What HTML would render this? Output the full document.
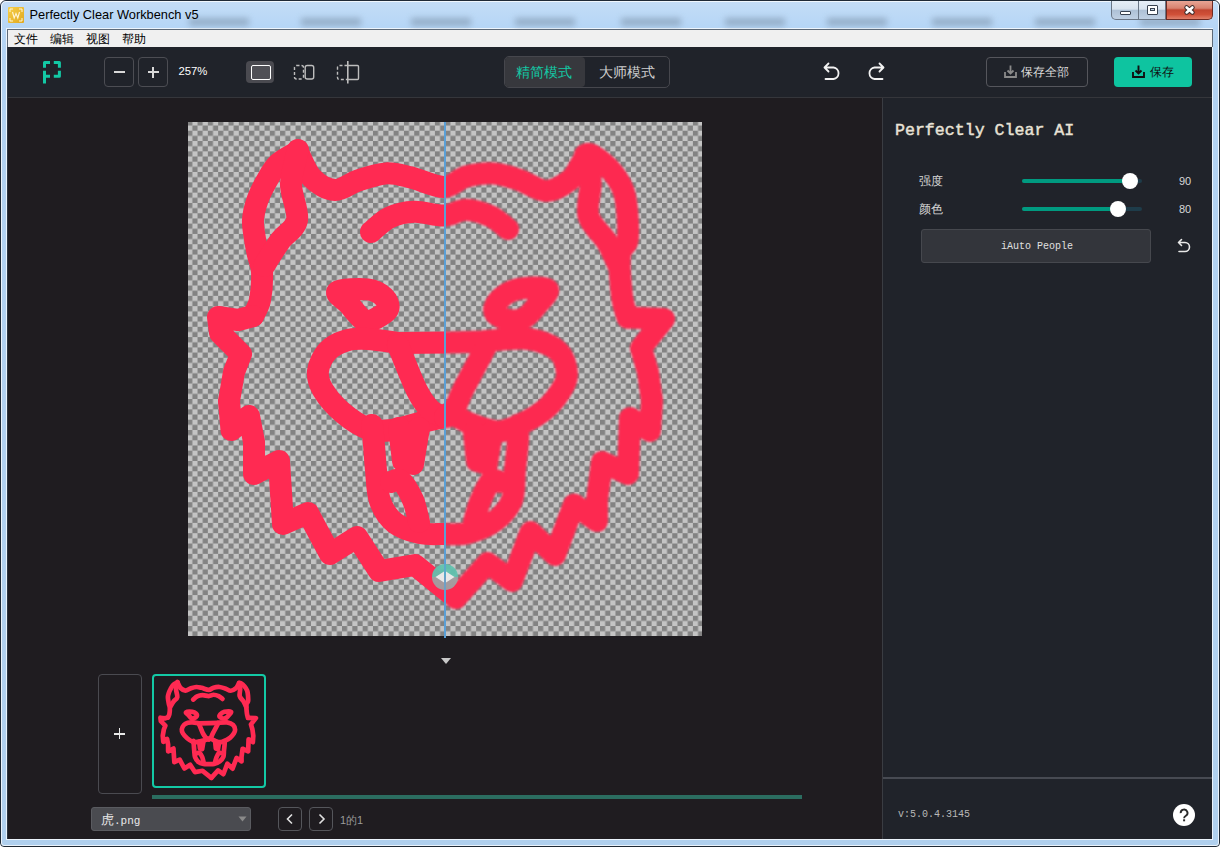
<!DOCTYPE html>
<html><head><meta charset="utf-8">
<style>
*{margin:0;padding:0;box-sizing:border-box}
html,body{width:1220px;height:847px;overflow:hidden;background:#fff}
body{position:relative;font-family:"Liberation Sans",sans-serif}
.a{position:absolute}
#frame{left:0;top:0;width:1220px;height:847px;border-radius:6px 6px 4px 4px;
 background:linear-gradient(180deg,#c4ddf6 0px,#b6d6f6 25px,#b2d2f2 60px,#b0d0ee 100%);
 border:1px solid #1f2a36}
#title{left:29.5px;top:7px;font-size:12.8px;color:#000;white-space:nowrap}
#menubar{left:7px;top:29px;width:1206px;height:18px;background:#f0f0f0;border:1px solid #5e6a78;border-bottom:none}
.menu{top:31px;font-size:12px;color:#000}
#client{left:8px;top:47px;width:1204px;height:792px;background:#1f1c20}
#toolbar{left:8px;top:47px;width:1204px;height:51px;background:#20232a;border-bottom:1px solid #35363b}
#panel{left:882px;top:98px;width:330px;height:741px;background:#20232a;border-left:1px solid #3a3c42}
.btn{border:1px solid #4c4d53;border-radius:4px}
.txt{white-space:nowrap}
</style></head><body>
<div id="frame" class="a"></div>
<div class="a" style="left:1px;top:1px;width:1218px;height:845px;border:1px solid rgba(255,255,255,.75);border-radius:5px 5px 3px 3px"></div>
<div class="a" style="left:6px;top:28px;width:1207px;height:812px;border:1px solid rgba(255,255,255,.75)"></div>
<div class="a" style="left:7px;top:29px;width:1205px;height:810px;border-left:1px solid #2c3642;border-top:1px solid #2c3642"></div>
<!-- blurred background stuff in title bar -->
<div class="a" style="left:0;top:0;width:1220px;height:30px;filter:blur(3px);opacity:.6"><div class="a" style="left:189px;top:18px;width:60px;height:8px;background:#7d93aa"></div><div class="a" style="left:301px;top:18px;width:60px;height:8px;background:#7d93aa"></div><div class="a" style="left:411px;top:18px;width:60px;height:8px;background:#7d93aa"></div><div class="a" style="left:515px;top:18px;width:60px;height:8px;background:#7d93aa"></div><div class="a" style="left:621px;top:18px;width:60px;height:8px;background:#7d93aa"></div><div class="a" style="left:725px;top:18px;width:60px;height:8px;background:#7d93aa"></div><div class="a" style="left:827px;top:18px;width:60px;height:8px;background:#7d93aa"></div><div class="a" style="left:932px;top:18px;width:60px;height:8px;background:#7d93aa"></div><div class="a" style="left:1035px;top:18px;width:60px;height:8px;background:#7d93aa"></div><div class="a" style="left:1140px;top:18px;width:60px;height:8px;background:#7d93aa"></div></div>
<!-- app icon -->
<div class="a" style="left:8px;top:7px;width:16px;height:16px;background:linear-gradient(135deg,#f7d04a,#e0a820);border-radius:1px"></div>
<svg class="a" style="left:8px;top:7px" width="16" height="16" viewBox="0 0 16 16" fill="none" stroke="#fff6d8" stroke-width="1">
 <path d="M2 5V2h3M11 2h3v3M14 11v3h-3M5 14H2v-3"/>
 <path d="M4.5 5l1.7 6 1.8-4.5 1.8 4.5 1.7-6" stroke-width="1.1"/>
</svg>
<div id="title" class="a txt">Perfectly Clear Workbench v5</div>
<!-- caption buttons -->
<div class="a" style="left:1111px;top:1px;width:55px;height:19px;border:1px solid #6a7686;border-top:none;border-radius:0 0 0 5px;background:linear-gradient(180deg,#e6eef7 0,#d8e3ef 45%,#aec1d6 52%,#bfd0e3 100%)"></div>
<div class="a" style="left:1138px;top:1px;width:1px;height:18px;background:#6a7686"></div>
<div class="a" style="left:1166px;top:1px;width:47px;height:19px;border:1px solid #6e2a22;border-top:none;border-radius:0 0 5px 0;background:linear-gradient(180deg,#e8a595 0,#d8826f 40%,#c24530 50%,#d05038 75%,#e0806a 100%)"></div>
<div class="a" style="left:1120px;top:11px;width:11px;height:4px;background:#fff;border:1px solid #384250;border-radius:1px"></div>
<div class="a" style="left:1147px;top:5px;width:11px;height:10px;background:#fff;border:1px solid #384250;border-radius:1px"></div>
<div class="a" style="left:1150px;top:8px;width:5px;height:3px;background:#c9d8e8;border:1px solid #384250"></div>
<svg class="a" style="left:1182px;top:3px" width="16" height="14"><path d="M4.6 4.4L10.4 9.4M10.4 4.4L4.6 9.4" stroke="#3a2a2a" stroke-width="4.6" stroke-linecap="round"/><path d="M4.6 4.4L10.4 9.4M10.4 4.4L4.6 9.4" stroke="#fff" stroke-width="2.6" stroke-linecap="round"/></svg>

<div id="menubar" class="a"></div>
<div class="a menu" style="left:14px">文件</div>
<div class="a menu" style="left:50px">编辑</div>
<div class="a menu" style="left:86px">视图</div>
<div class="a menu" style="left:122px">帮助</div>

<div id="client" class="a"></div>
<div id="toolbar" class="a"></div>
<!-- logo -->
<svg class="a" style="left:40px;top:58px" width="26" height="28" viewBox="0 0 26 28" fill="none" stroke="#13c9a5" stroke-width="3">
 <path d="M4.5 9.8V4.6H10M13.8 4.6H19.4V9.8M13.8 18.3H19.4V12.7" stroke-linejoin="round"/><path d="M4.5 12.7V25.5M4.5 18.3H10"/>
</svg>
<!-- zoom buttons -->
<div class="a btn" style="left:104px;top:57px;width:30px;height:30px"></div>
<div class="a" style="left:113.5px;top:71px;width:11px;height:2px;background:#d8d8d8"></div>
<div class="a btn" style="left:138px;top:57px;width:30px;height:30px"></div>
<div class="a" style="left:147.5px;top:71px;width:11px;height:2px;background:#d8d8d8"></div>
<div class="a" style="left:152px;top:66.5px;width:2px;height:11px;background:#d8d8d8"></div>
<div class="a txt" style="left:178.5px;top:65.3px;font-size:11.3px;color:#fff">257%</div>
<!-- view icons -->
<div class="a" style="left:246px;top:61px;width:28px;height:22px;background:#4a4a50;border-radius:4px"></div>
<div class="a" style="left:251px;top:65px;width:20px;height:15px;border:1.6px solid #fff;border-radius:2px;background:#505056"></div>
<svg class="a" style="left:290px;top:61px" width="28" height="22" fill="none" stroke="#bdbdbd" stroke-width="1.4">
 <rect x="4.5" y="4.5" width="9" height="13.5" rx="2" stroke-dasharray="3 2"/>
 <rect x="15.2" y="4.5" width="8.5" height="13.5" rx="2"/>
</svg>
<svg class="a" style="left:334px;top:59px" width="28" height="26" fill="none" stroke="#bdbdbd" stroke-width="1.4">
 <path d="M13.5 6.5H5.5Q3.5 6.5 3.5 8.5V18.5Q3.5 20.5 5.5 20.5H13.5" stroke-dasharray="3 2"/>
 <path d="M13.8 6.5H23.5Q24.5 6.5 24.5 7.5V19.5Q24.5 20.5 23.5 20.5H13.8"/>
 <path d="M13.8 2V24.5" stroke-width="1.6"/>
</svg>
<!-- mode toggle -->
<div class="a" style="left:504px;top:56px;width:166px;height:32px;border:1px solid #46474d;border-radius:5px"></div>
<div class="a" style="left:505px;top:57px;width:80px;height:30px;background:#37383d;border-radius:4px"></div>
<div class="a txt" style="left:516px;top:64px;font-size:14px;color:#13c9a5">精简模式</div>
<div class="a txt" style="left:599px;top:64px;font-size:14px;color:#cfcfcf">大师模式</div>
<!-- undo redo -->
<svg class="a" style="left:818px;top:58px" width="72" height="26" fill="none" stroke="#f2f2f2" stroke-width="1.8" stroke-linecap="round" stroke-linejoin="round">
 <path d="M7 9.5H15.5A5.8 5.8 0 0 1 15.5 21H7.5M10.5 5.5L6.5 9.5L10.5 13.5"/>
 <path d="M65 9.5H56.5A5.8 5.8 0 0 0 56.5 21H64.5M61.5 5.5L65.5 9.5L61.5 13.5"/>
</svg>
<!-- save all -->
<div class="a" style="left:986px;top:57px;width:102px;height:30px;border:1px solid #55565c;border-radius:4px"></div>
<svg class="a" style="left:1003px;top:64px" width="15" height="15" fill="none" stroke="#8a8a8a" stroke-width="1.8">
 <path d="M2 8v5h11V8M7.5 1.5v8M4.5 6.5l3 3 3-3"/>
</svg>
<div class="a txt" style="left:1021px;top:64px;font-size:12px;color:#dcdcdc">保存全部</div>
<!-- save -->
<div class="a" style="left:1114px;top:57px;width:78px;height:30px;background:#0ec4a0;border-radius:4px"></div>
<svg class="a" style="left:1131px;top:64px" width="15" height="15" fill="none" stroke="#111" stroke-width="1.9">
 <path d="M2 8v5h11V8M7.5 1.5v8M4.5 6.5l3 3 3-3"/>
</svg>
<div class="a txt" style="left:1150px;top:64px;font-size:12px;color:#111">保存</div>

<!-- canvas image -->
<div class="a" style="left:188px;top:122px;width:514px;height:514px;overflow:hidden">
<svg class="a" style="left:0;top:0" width="514" height="514"><defs><pattern id="ck" width="10.32" height="10.32" patternUnits="userSpaceOnUse" x="-0.8" y="-1.6"><rect width="10.32" height="10.32" fill="#c4c4c4"/><rect width="5.16" height="5.16" fill="#838383"/><rect x="5.16" y="5.16" width="5.16" height="5.16" fill="#838383"/></pattern></defs><rect width="514" height="514" fill="url(#ck)"/></svg>
<div class="a" style="left:0;top:0;width:257px;height:514px;overflow:hidden">
<svg class="a" style="left:-188px;top:-122px;filter:blur(0.5px)" width="1220" height="847" fill="none" stroke="#ff2a52" stroke-width="22" stroke-linecap="round" stroke-linejoin="round">
<path d="M297.0 152.0 C293.8 154.0 283.2 159.0 278.0 164.0 C272.8 169.0 269.4 176.0 266.0 182.0 C262.6 188.0 259.7 193.7 257.5 200.0 C255.3 206.3 253.4 213.5 253.0 220.0 C252.6 226.5 254.2 233.2 255.0 239.0 C255.8 244.8 256.8 249.5 258.0 255.0 C259.2 260.5 261.7 264.5 262.0 272.0 C262.3 279.5 261.5 292.7 260.0 300.0 C258.5 307.3 254.2 313.3 253.0 316.0"/><path d="M253.0 316.0 L238.0 320.0 L218.0 317.0 L220.0 333.0 L241.0 354.0 L234.0 372.0 L229.0 401.0 L231.5 430.0 L249.0 416.0 L254.0 442.0 L254.0 474.0 L279.0 461.0 L283.0 524.0 L308.0 513.0 L330.0 554.0 L357.0 537.0 L379.0 571.0 L415.0 565.0 L456.0 598.0"/><path d="M456.0 598.0 L487.6 563.0 L512.0 581.0 L530.6 532.0 L555.0 555.0 L574.0 504.5 L597.0 521.0 L597.0 500.0 L602.0 462.0 L628.0 474.0 L630.0 418.0 L650.0 431.0 L652.0 401.0 L648.0 372.0 L641.0 348.0 L664.0 319.0 L627.5 317.5"/><path d="M627.5 317.5 C626.6 313.9 623.2 306.4 622.0 296.0 C620.8 285.6 619.1 264.2 620.0 255.0 C620.9 245.8 626.2 247.0 627.5 240.5 C628.8 234.0 628.1 224.2 627.5 216.0 C626.9 207.8 626.4 198.9 623.7 191.4 C621.0 183.9 616.7 177.1 611.4 171.0 C606.1 164.9 596.4 157.7 592.0 155.0 C587.6 152.3 586.2 155.0 585.0 155.0"/><path d="M298.0 152.0 C300.3 156.3 305.8 171.7 312.0 178.0 C318.2 184.3 327.3 189.6 335.0 190.0 C342.7 190.4 349.6 183.3 358.0 180.5 C366.4 177.7 377.0 173.9 385.7 173.4 C394.4 172.9 400.7 175.0 410.4 177.3 C420.1 179.6 434.7 187.1 444.0 187.0 C453.3 186.9 457.6 178.9 466.0 176.6 C474.4 174.3 485.4 172.8 494.5 173.4 C503.6 174.1 511.8 177.6 520.5 180.5 C529.2 183.4 538.2 191.1 546.5 191.0 C554.8 190.9 564.2 184.5 570.0 180.0 C575.8 175.5 578.3 168.2 581.0 164.0 C583.7 159.8 585.2 156.5 586.0 155.0"/><path d="M298.0 150.0 C296.8 155.7 291.2 172.3 291.0 184.0 C290.8 195.7 298.8 210.5 297.0 220.0 C295.2 229.5 285.5 233.3 280.0 241.0 C274.5 248.7 266.7 261.8 264.0 266.0"/><path d="M588.0 156.0 C588.5 160.5 590.6 173.0 590.7 183.0 C590.8 193.0 586.0 206.4 588.5 216.0 C591.0 225.6 601.6 233.5 606.0 240.5 C610.4 247.5 612.8 253.6 615.0 258.0 C617.2 262.4 618.3 265.5 619.0 267.0"/><path d="M371.0 232.0 C374.1 229.6 382.4 220.9 389.6 217.5 C396.8 214.1 405.2 212.0 414.3 211.7 C423.4 211.4 435.4 215.9 444.0 215.6 C452.6 215.3 458.2 209.6 466.0 209.7 C473.8 209.8 483.6 213.0 490.6 216.2 C497.6 219.4 505.1 226.9 508.0 229.0"/><path d="M337.6 291.5 C340.8 289.1 359.9 288.5 367.6 289.4 C375.3 290.3 380.4 293.7 383.8 297.0 C387.2 300.3 389.9 305.5 387.9 309.4 C385.9 313.3 375.9 318.9 371.6 320.5 C367.3 322.1 366.0 321.9 362.2 319.1 C358.4 316.3 352.7 308.5 348.6 303.9 C344.5 299.3 334.4 293.9 337.6 291.5Z"/><path d="M547.4 289.2 C544.0 286.6 525.0 287.4 516.8 289.4 C508.6 291.4 501.6 297.1 498.0 301.1 C494.4 305.1 493.0 310.3 495.2 313.5 C497.4 316.7 506.4 319.7 511.4 320.4 C516.4 321.1 520.7 320.1 525.0 317.6 C529.3 315.1 533.4 309.9 537.1 305.2 C540.8 300.5 550.8 291.8 547.4 289.2Z"/><path d="M398.0 343.0 C392.9 342.3 376.2 339.4 367.5 339.0 C358.8 338.6 352.6 338.6 346.0 340.6 C339.4 342.6 332.3 345.9 327.6 351.0 C322.9 356.1 318.8 364.5 318.0 371.0 C317.2 377.5 318.8 383.0 323.0 390.0 C327.2 397.0 335.3 406.5 343.0 413.0 C350.7 419.5 360.8 426.2 369.0 429.0 C377.2 431.8 383.0 431.2 392.0 430.0 C401.0 428.8 414.2 424.2 423.0 422.0 C431.8 419.8 441.3 417.8 445.0 417.0"/><path d="M398.0 343.0 L450.0 342.4 L486.0 341.4"/><path d="M398.0 345.0 C401.1 352.5 411.3 379.2 416.7 390.0 C422.1 400.8 425.8 405.5 430.5 410.0 C435.2 414.5 442.6 415.8 445.0 417.0"/><path d="M486.0 346.7 C482.2 353.9 468.1 380.0 463.0 390.0 C457.9 400.0 458.3 402.4 455.3 406.9 C452.3 411.4 446.7 415.3 445.0 417.0"/><path d="M486.0 341.0 C493.2 340.7 517.0 337.3 529.0 339.0 C541.0 340.7 551.7 345.2 558.0 351.0 C564.3 356.8 566.7 367.2 567.0 374.0 C567.3 380.8 563.8 386.0 560.0 392.0 C556.2 398.0 550.8 404.7 544.4 410.0 C538.0 415.3 529.1 420.2 521.4 423.8 C513.7 427.4 506.8 431.4 498.3 431.4 C489.9 431.4 477.9 426.4 470.7 423.8 C463.5 421.2 459.3 417.1 455.0 416.0 C450.7 414.9 446.7 416.8 445.0 417.0"/><path d="M372.0 425.0 C372.3 428.3 373.3 437.5 374.0 445.0 C374.7 452.5 375.0 460.7 376.0 470.0 C377.0 479.3 376.8 492.2 380.0 501.0 C383.2 509.8 388.3 517.7 395.0 523.0 C401.7 528.3 411.8 531.2 420.0 533.0 C428.2 534.8 436.0 534.0 444.0 534.0 C452.0 534.0 459.5 535.2 468.0 533.0 C476.5 530.8 487.7 526.5 495.0 521.0 C502.3 515.5 508.7 508.5 512.0 500.0 C515.3 491.5 514.0 479.8 515.0 470.0 C516.0 460.2 517.5 448.5 518.0 441.0 C518.5 433.5 518.0 427.7 518.0 425.0"/><path d="M399.0 428.0 L403.0 461.0 L413.0 464.0 L419.0 428.0"/><path d="M474.0 432.0 L477.0 461.0 L487.0 464.0 L492.0 432.0"/><path d="M391.0 482.0 C392.7 481.8 397.3 478.0 401.0 481.0 C404.7 484.0 410.0 493.2 413.0 500.0 C416.0 506.8 418.0 518.3 419.0 522.0"/><path d="M500.0 482.0 C498.5 481.8 494.3 477.7 491.0 481.0 C487.7 484.3 482.8 495.2 480.0 502.0 C477.2 508.8 475.0 518.7 474.0 522.0"/>
</svg></div>
<div class="a" style="left:257px;top:0;width:257px;height:514px;overflow:hidden">
<svg class="a" style="left:-445px;top:-122px;filter:blur(0.9px)" width="1220" height="847" fill="none" stroke="#fd2950" stroke-width="22" stroke-linecap="round" stroke-linejoin="round">
<path d="M297.0 152.0 C293.8 154.0 283.2 159.0 278.0 164.0 C272.8 169.0 269.4 176.0 266.0 182.0 C262.6 188.0 259.7 193.7 257.5 200.0 C255.3 206.3 253.4 213.5 253.0 220.0 C252.6 226.5 254.2 233.2 255.0 239.0 C255.8 244.8 256.8 249.5 258.0 255.0 C259.2 260.5 261.7 264.5 262.0 272.0 C262.3 279.5 261.5 292.7 260.0 300.0 C258.5 307.3 254.2 313.3 253.0 316.0"/><path d="M253.0 316.0 L238.0 320.0 L218.0 317.0 L220.0 333.0 L241.0 354.0 L234.0 372.0 L229.0 401.0 L231.5 430.0 L249.0 416.0 L254.0 442.0 L254.0 474.0 L279.0 461.0 L283.0 524.0 L308.0 513.0 L330.0 554.0 L357.0 537.0 L379.0 571.0 L415.0 565.0 L456.0 598.0"/><path d="M456.0 598.0 L487.6 563.0 L512.0 581.0 L530.6 532.0 L555.0 555.0 L574.0 504.5 L597.0 521.0 L597.0 500.0 L602.0 462.0 L628.0 474.0 L630.0 418.0 L650.0 431.0 L652.0 401.0 L648.0 372.0 L641.0 348.0 L664.0 319.0 L627.5 317.5"/><path d="M627.5 317.5 C626.6 313.9 623.2 306.4 622.0 296.0 C620.8 285.6 619.1 264.2 620.0 255.0 C620.9 245.8 626.2 247.0 627.5 240.5 C628.8 234.0 628.1 224.2 627.5 216.0 C626.9 207.8 626.4 198.9 623.7 191.4 C621.0 183.9 616.7 177.1 611.4 171.0 C606.1 164.9 596.4 157.7 592.0 155.0 C587.6 152.3 586.2 155.0 585.0 155.0"/><path d="M298.0 152.0 C300.3 156.3 305.8 171.7 312.0 178.0 C318.2 184.3 327.3 189.6 335.0 190.0 C342.7 190.4 349.6 183.3 358.0 180.5 C366.4 177.7 377.0 173.9 385.7 173.4 C394.4 172.9 400.7 175.0 410.4 177.3 C420.1 179.6 434.7 187.1 444.0 187.0 C453.3 186.9 457.6 178.9 466.0 176.6 C474.4 174.3 485.4 172.8 494.5 173.4 C503.6 174.1 511.8 177.6 520.5 180.5 C529.2 183.4 538.2 191.1 546.5 191.0 C554.8 190.9 564.2 184.5 570.0 180.0 C575.8 175.5 578.3 168.2 581.0 164.0 C583.7 159.8 585.2 156.5 586.0 155.0"/><path d="M298.0 150.0 C296.8 155.7 291.2 172.3 291.0 184.0 C290.8 195.7 298.8 210.5 297.0 220.0 C295.2 229.5 285.5 233.3 280.0 241.0 C274.5 248.7 266.7 261.8 264.0 266.0"/><path d="M588.0 156.0 C588.5 160.5 590.6 173.0 590.7 183.0 C590.8 193.0 586.0 206.4 588.5 216.0 C591.0 225.6 601.6 233.5 606.0 240.5 C610.4 247.5 612.8 253.6 615.0 258.0 C617.2 262.4 618.3 265.5 619.0 267.0"/><path d="M371.0 232.0 C374.1 229.6 382.4 220.9 389.6 217.5 C396.8 214.1 405.2 212.0 414.3 211.7 C423.4 211.4 435.4 215.9 444.0 215.6 C452.6 215.3 458.2 209.6 466.0 209.7 C473.8 209.8 483.6 213.0 490.6 216.2 C497.6 219.4 505.1 226.9 508.0 229.0"/><path d="M337.6 291.5 C340.8 289.1 359.9 288.5 367.6 289.4 C375.3 290.3 380.4 293.7 383.8 297.0 C387.2 300.3 389.9 305.5 387.9 309.4 C385.9 313.3 375.9 318.9 371.6 320.5 C367.3 322.1 366.0 321.9 362.2 319.1 C358.4 316.3 352.7 308.5 348.6 303.9 C344.5 299.3 334.4 293.9 337.6 291.5Z"/><path d="M547.4 289.2 C544.0 286.6 525.0 287.4 516.8 289.4 C508.6 291.4 501.6 297.1 498.0 301.1 C494.4 305.1 493.0 310.3 495.2 313.5 C497.4 316.7 506.4 319.7 511.4 320.4 C516.4 321.1 520.7 320.1 525.0 317.6 C529.3 315.1 533.4 309.9 537.1 305.2 C540.8 300.5 550.8 291.8 547.4 289.2Z"/><path d="M398.0 343.0 C392.9 342.3 376.2 339.4 367.5 339.0 C358.8 338.6 352.6 338.6 346.0 340.6 C339.4 342.6 332.3 345.9 327.6 351.0 C322.9 356.1 318.8 364.5 318.0 371.0 C317.2 377.5 318.8 383.0 323.0 390.0 C327.2 397.0 335.3 406.5 343.0 413.0 C350.7 419.5 360.8 426.2 369.0 429.0 C377.2 431.8 383.0 431.2 392.0 430.0 C401.0 428.8 414.2 424.2 423.0 422.0 C431.8 419.8 441.3 417.8 445.0 417.0"/><path d="M398.0 343.0 L450.0 342.4 L486.0 341.4"/><path d="M398.0 345.0 C401.1 352.5 411.3 379.2 416.7 390.0 C422.1 400.8 425.8 405.5 430.5 410.0 C435.2 414.5 442.6 415.8 445.0 417.0"/><path d="M486.0 346.7 C482.2 353.9 468.1 380.0 463.0 390.0 C457.9 400.0 458.3 402.4 455.3 406.9 C452.3 411.4 446.7 415.3 445.0 417.0"/><path d="M486.0 341.0 C493.2 340.7 517.0 337.3 529.0 339.0 C541.0 340.7 551.7 345.2 558.0 351.0 C564.3 356.8 566.7 367.2 567.0 374.0 C567.3 380.8 563.8 386.0 560.0 392.0 C556.2 398.0 550.8 404.7 544.4 410.0 C538.0 415.3 529.1 420.2 521.4 423.8 C513.7 427.4 506.8 431.4 498.3 431.4 C489.9 431.4 477.9 426.4 470.7 423.8 C463.5 421.2 459.3 417.1 455.0 416.0 C450.7 414.9 446.7 416.8 445.0 417.0"/><path d="M372.0 425.0 C372.3 428.3 373.3 437.5 374.0 445.0 C374.7 452.5 375.0 460.7 376.0 470.0 C377.0 479.3 376.8 492.2 380.0 501.0 C383.2 509.8 388.3 517.7 395.0 523.0 C401.7 528.3 411.8 531.2 420.0 533.0 C428.2 534.8 436.0 534.0 444.0 534.0 C452.0 534.0 459.5 535.2 468.0 533.0 C476.5 530.8 487.7 526.5 495.0 521.0 C502.3 515.5 508.7 508.5 512.0 500.0 C515.3 491.5 514.0 479.8 515.0 470.0 C516.0 460.2 517.5 448.5 518.0 441.0 C518.5 433.5 518.0 427.7 518.0 425.0"/><path d="M399.0 428.0 L403.0 461.0 L413.0 464.0 L419.0 428.0"/><path d="M474.0 432.0 L477.0 461.0 L487.0 464.0 L492.0 432.0"/><path d="M391.0 482.0 C392.7 481.8 397.3 478.0 401.0 481.0 C404.7 484.0 410.0 493.2 413.0 500.0 C416.0 506.8 418.0 518.3 419.0 522.0"/><path d="M500.0 482.0 C498.5 481.8 494.3 477.7 491.0 481.0 C487.7 484.3 482.8 495.2 480.0 502.0 C477.2 508.8 475.0 518.7 474.0 522.0"/>
</svg></div>
</div>
<!-- split line and handle -->
<div class="a" style="left:444px;top:122px;width:2px;height:516px;background:#5a9fd6"></div>
<div class="a" style="left:432px;top:564px;width:26px;height:26px;border-radius:50%;background:linear-gradient(180deg,rgba(95,195,175,.92) 0,rgba(95,195,175,.92) 48%,rgba(160,160,162,.95) 52%,rgba(160,160,162,.95) 100%)"></div>
<svg class="a" style="left:432px;top:564px" width="26" height="26"><path d="M3.5 13L12 7.5V18.5ZM22.5 13L14 7.5V18.5Z" fill="#e8e8e8"/></svg>
<div class="a" style="left:444px;top:122px;width:2px;height:516px;background:rgba(90,159,214,.7)"></div>
<!-- down arrow -->
<svg class="a" style="left:440px;top:657px" width="12" height="8"><path d="M1 1H11L6 7Z" fill="#c8c8c8"/></svg>

<!-- filmstrip -->
<div class="a" style="left:98px;top:674px;width:44px;height:120px;border:1px solid #4a4a50;border-radius:4px"></div>
<div class="a" style="left:114px;top:733px;width:11px;height:1.6px;background:#e8e8e8"></div>
<div class="a" style="left:118.7px;top:728.3px;width:1.6px;height:11px;background:#e8e8e8"></div>
<div class="a" style="left:152px;top:674px;width:114px;height:114px;border:2px solid #13c9a5;border-radius:4px"></div>
<svg class="a" style="left:0;top:0" width="1220" height="847" fill="none" stroke="#ff2a52" stroke-width="22" stroke-linecap="round" stroke-linejoin="round">
<g transform="translate(154 676) scale(0.214) translate(-188 -122)"><path d="M297.0 152.0 C293.8 154.0 283.2 159.0 278.0 164.0 C272.8 169.0 269.4 176.0 266.0 182.0 C262.6 188.0 259.7 193.7 257.5 200.0 C255.3 206.3 253.4 213.5 253.0 220.0 C252.6 226.5 254.2 233.2 255.0 239.0 C255.8 244.8 256.8 249.5 258.0 255.0 C259.2 260.5 261.7 264.5 262.0 272.0 C262.3 279.5 261.5 292.7 260.0 300.0 C258.5 307.3 254.2 313.3 253.0 316.0"/><path d="M253.0 316.0 L238.0 320.0 L218.0 317.0 L220.0 333.0 L241.0 354.0 L234.0 372.0 L229.0 401.0 L231.5 430.0 L249.0 416.0 L254.0 442.0 L254.0 474.0 L279.0 461.0 L283.0 524.0 L308.0 513.0 L330.0 554.0 L357.0 537.0 L379.0 571.0 L415.0 565.0 L456.0 598.0"/><path d="M456.0 598.0 L487.6 563.0 L512.0 581.0 L530.6 532.0 L555.0 555.0 L574.0 504.5 L597.0 521.0 L597.0 500.0 L602.0 462.0 L628.0 474.0 L630.0 418.0 L650.0 431.0 L652.0 401.0 L648.0 372.0 L641.0 348.0 L664.0 319.0 L627.5 317.5"/><path d="M627.5 317.5 C626.6 313.9 623.2 306.4 622.0 296.0 C620.8 285.6 619.1 264.2 620.0 255.0 C620.9 245.8 626.2 247.0 627.5 240.5 C628.8 234.0 628.1 224.2 627.5 216.0 C626.9 207.8 626.4 198.9 623.7 191.4 C621.0 183.9 616.7 177.1 611.4 171.0 C606.1 164.9 596.4 157.7 592.0 155.0 C587.6 152.3 586.2 155.0 585.0 155.0"/><path d="M298.0 152.0 C300.3 156.3 305.8 171.7 312.0 178.0 C318.2 184.3 327.3 189.6 335.0 190.0 C342.7 190.4 349.6 183.3 358.0 180.5 C366.4 177.7 377.0 173.9 385.7 173.4 C394.4 172.9 400.7 175.0 410.4 177.3 C420.1 179.6 434.7 187.1 444.0 187.0 C453.3 186.9 457.6 178.9 466.0 176.6 C474.4 174.3 485.4 172.8 494.5 173.4 C503.6 174.1 511.8 177.6 520.5 180.5 C529.2 183.4 538.2 191.1 546.5 191.0 C554.8 190.9 564.2 184.5 570.0 180.0 C575.8 175.5 578.3 168.2 581.0 164.0 C583.7 159.8 585.2 156.5 586.0 155.0"/><path d="M298.0 150.0 C296.8 155.7 291.2 172.3 291.0 184.0 C290.8 195.7 298.8 210.5 297.0 220.0 C295.2 229.5 285.5 233.3 280.0 241.0 C274.5 248.7 266.7 261.8 264.0 266.0"/><path d="M588.0 156.0 C588.5 160.5 590.6 173.0 590.7 183.0 C590.8 193.0 586.0 206.4 588.5 216.0 C591.0 225.6 601.6 233.5 606.0 240.5 C610.4 247.5 612.8 253.6 615.0 258.0 C617.2 262.4 618.3 265.5 619.0 267.0"/><path d="M371.0 232.0 C374.1 229.6 382.4 220.9 389.6 217.5 C396.8 214.1 405.2 212.0 414.3 211.7 C423.4 211.4 435.4 215.9 444.0 215.6 C452.6 215.3 458.2 209.6 466.0 209.7 C473.8 209.8 483.6 213.0 490.6 216.2 C497.6 219.4 505.1 226.9 508.0 229.0"/><path d="M337.6 291.5 C340.8 289.1 359.9 288.5 367.6 289.4 C375.3 290.3 380.4 293.7 383.8 297.0 C387.2 300.3 389.9 305.5 387.9 309.4 C385.9 313.3 375.9 318.9 371.6 320.5 C367.3 322.1 366.0 321.9 362.2 319.1 C358.4 316.3 352.7 308.5 348.6 303.9 C344.5 299.3 334.4 293.9 337.6 291.5Z"/><path d="M547.4 289.2 C544.0 286.6 525.0 287.4 516.8 289.4 C508.6 291.4 501.6 297.1 498.0 301.1 C494.4 305.1 493.0 310.3 495.2 313.5 C497.4 316.7 506.4 319.7 511.4 320.4 C516.4 321.1 520.7 320.1 525.0 317.6 C529.3 315.1 533.4 309.9 537.1 305.2 C540.8 300.5 550.8 291.8 547.4 289.2Z"/><path d="M398.0 343.0 C392.9 342.3 376.2 339.4 367.5 339.0 C358.8 338.6 352.6 338.6 346.0 340.6 C339.4 342.6 332.3 345.9 327.6 351.0 C322.9 356.1 318.8 364.5 318.0 371.0 C317.2 377.5 318.8 383.0 323.0 390.0 C327.2 397.0 335.3 406.5 343.0 413.0 C350.7 419.5 360.8 426.2 369.0 429.0 C377.2 431.8 383.0 431.2 392.0 430.0 C401.0 428.8 414.2 424.2 423.0 422.0 C431.8 419.8 441.3 417.8 445.0 417.0"/><path d="M398.0 343.0 L450.0 342.4 L486.0 341.4"/><path d="M398.0 345.0 C401.1 352.5 411.3 379.2 416.7 390.0 C422.1 400.8 425.8 405.5 430.5 410.0 C435.2 414.5 442.6 415.8 445.0 417.0"/><path d="M486.0 346.7 C482.2 353.9 468.1 380.0 463.0 390.0 C457.9 400.0 458.3 402.4 455.3 406.9 C452.3 411.4 446.7 415.3 445.0 417.0"/><path d="M486.0 341.0 C493.2 340.7 517.0 337.3 529.0 339.0 C541.0 340.7 551.7 345.2 558.0 351.0 C564.3 356.8 566.7 367.2 567.0 374.0 C567.3 380.8 563.8 386.0 560.0 392.0 C556.2 398.0 550.8 404.7 544.4 410.0 C538.0 415.3 529.1 420.2 521.4 423.8 C513.7 427.4 506.8 431.4 498.3 431.4 C489.9 431.4 477.9 426.4 470.7 423.8 C463.5 421.2 459.3 417.1 455.0 416.0 C450.7 414.9 446.7 416.8 445.0 417.0"/><path d="M372.0 425.0 C372.3 428.3 373.3 437.5 374.0 445.0 C374.7 452.5 375.0 460.7 376.0 470.0 C377.0 479.3 376.8 492.2 380.0 501.0 C383.2 509.8 388.3 517.7 395.0 523.0 C401.7 528.3 411.8 531.2 420.0 533.0 C428.2 534.8 436.0 534.0 444.0 534.0 C452.0 534.0 459.5 535.2 468.0 533.0 C476.5 530.8 487.7 526.5 495.0 521.0 C502.3 515.5 508.7 508.5 512.0 500.0 C515.3 491.5 514.0 479.8 515.0 470.0 C516.0 460.2 517.5 448.5 518.0 441.0 C518.5 433.5 518.0 427.7 518.0 425.0"/><path d="M399.0 428.0 L403.0 461.0 L413.0 464.0 L419.0 428.0"/><path d="M474.0 432.0 L477.0 461.0 L487.0 464.0 L492.0 432.0"/><path d="M391.0 482.0 C392.7 481.8 397.3 478.0 401.0 481.0 C404.7 484.0 410.0 493.2 413.0 500.0 C416.0 506.8 418.0 518.3 419.0 522.0"/><path d="M500.0 482.0 C498.5 481.8 494.3 477.7 491.0 481.0 C487.7 484.3 482.8 495.2 480.0 502.0 C477.2 508.8 475.0 518.7 474.0 522.0"/></g>
</svg>
<div class="a" style="left:152px;top:795px;width:650px;height:4px;background:#2b6d60"></div>
<!-- bottom controls -->
<div class="a" style="left:91px;top:807px;width:160px;height:24px;background:#4a4b50;border:1px solid #5a5b60;border-radius:3px"></div>
<div class="a txt" style="left:101px;top:811px;font-size:13px;color:#e8e8e8">虎<span style="font-family:'Liberation Mono';font-size:11px">.png</span></div>
<svg class="a" style="left:238px;top:816px" width="9" height="6"><path d="M0.5 0.5H8.5L4.5 5.5Z" fill="#8a8a8a"/></svg>
<div class="a btn" style="left:278px;top:807px;width:24px;height:24px;border-color:#55565b"></div>
<div class="a btn" style="left:309px;top:807px;width:24px;height:24px;border-color:#55565b"></div>
<svg class="a" style="left:278px;top:807px" width="56" height="24" fill="none" stroke="#e0e0e0" stroke-width="1.6"><path d="M14 7.5L9.5 12L14 16.5M41.5 7.5L46 12L41.5 16.5"/></svg>
<div class="a txt" style="left:340px;top:812.5px;font-size:11px;color:#9a9a9a">1的1</div>

<!-- right panel -->
<div id="panel" class="a"></div>
<div class="a txt" style="left:895px;top:120.5px;font-family:'Liberation Mono',monospace;font-size:16.6px;-webkit-text-stroke:0.45px #e8e2d6;color:#e8e2d6">Perfectly Clear AI</div>
<div class="a txt" style="left:919px;top:173px;font-size:12px;color:#d8d8d8">强度</div>
<div class="a txt" style="left:919px;top:201px;font-size:12px;color:#d8d8d8">颜色</div>
<div class="a" style="left:1022px;top:179px;width:120px;height:4px;border-radius:2px;background:#1e3c4a"></div>
<div class="a" style="left:1022px;top:179px;width:108px;height:4px;border-radius:2px;background:#009a80"></div>
<div class="a" style="left:1122px;top:173px;width:16px;height:16px;border-radius:50%;background:#fff"></div>
<div class="a" style="left:1022px;top:207px;width:120px;height:4px;border-radius:2px;background:#1e3c4a"></div>
<div class="a" style="left:1022px;top:207px;width:96px;height:4px;border-radius:2px;background:#009a80"></div>
<div class="a" style="left:1110px;top:201px;width:16px;height:16px;border-radius:50%;background:#fff"></div>
<div class="a txt" style="left:1179px;top:175px;font-size:11px;color:#d8d8d8">90</div>
<div class="a txt" style="left:1179px;top:203px;font-size:11px;color:#d8d8d8">80</div>
<div class="a" style="left:921px;top:229px;width:230px;height:34px;background:#33353b;border:1px solid #46484e;border-radius:3px"></div>
<div class="a txt" style="left:1001px;top:241px;font-family:'Liberation Mono',monospace;font-size:10px;color:#e0e0e0">iAuto People</div>
<svg class="a" style="left:1174px;top:236px" width="20" height="20" fill="none" stroke="#e8e8e8" stroke-width="1.6" stroke-linecap="round" stroke-linejoin="round">
 <path d="M4.5 6.5H11A4.5 4.5 0 0 1 11 15.5H5M7.5 3.5L4.5 6.5L7.5 9.5"/>
</svg>
<div class="a" style="left:883px;top:777px;width:329px;height:2px;background:#474a52"></div>
<div class="a txt" style="left:898px;top:809px;font-family:'Liberation Mono',monospace;font-size:10px;color:#b8b8b8">v:5.0.4.3145</div>
<div class="a" style="left:1173px;top:804px;width:22px;height:22px;border-radius:50%;background:#fff"></div>
<svg class="a" style="left:1173px;top:804px" width="22" height="22"><path d="M7.7 9.2A3.4 3.4 0 1 1 12.9 11.8Q11.1 12.9 11.1 14.2" fill="none" stroke="#2a2a2a" stroke-width="1.9"/><rect x="10.1" y="15.3" width="2" height="2" fill="#2a2a2a"/></svg>
</body></html>
